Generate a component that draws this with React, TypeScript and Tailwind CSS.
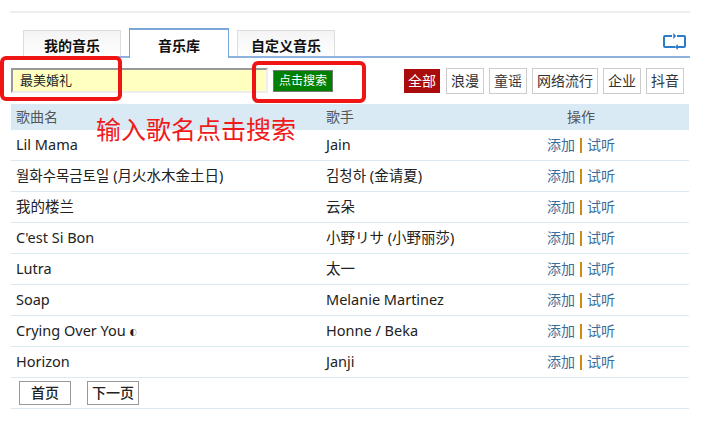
import React from "react";

const songs = [
  ["Lil Mama", "Jain"],
  ["월화수목금토일 (月火水木金土日)", "김청하 (金请夏)"],
  ["我的楼兰", "云朵"],
  ["C'est Si Bon", "小野リサ (小野丽莎)"],
  ["Lutra", "太一"],
  ["Soap", "Melanie Martinez"],
  ["Crying Over You", "Honne / Beka"],
  ["Horizon", "Janji"],
];

const tags = ["浪漫", "童谣", "网络流行", "企业", "抖音"];

const Tab = ({ label, active }: { label: string; active?: boolean }) => (
  <div
    className={
      active
        ? "w-[100px] h-[30px] -mb-[2px] bg-white border border-b-0 border-[#7ba6d9] border-t-2 text-center leading-[32px] font-bold text-[14px] text-[#111]"
        : "w-[98px] h-[26px] bg-gradient-to-b from-[#f4f4f4] to-white border border-b-0 border-[#ddd] text-center leading-[29px] font-bold text-[14px] text-[#111]"
    }
  >
    {label}
  </div>
);

export default function App() {
  return (
    <div className="relative w-[720px] h-[421px] bg-white overflow-hidden font-['Noto_Sans','Noto_Sans_CJK_SC',sans-serif] text-[14px] text-[#222]">
      <div className="pt-[11px] pl-[10px] w-[690px]">
        <div className="h-[2px] bg-[#eee]" />

        <div className="relative mt-[16px] h-[29px] flex items-end gap-[8px] pl-[13px] border-b-2 border-[#8fb1dd] box-border">
          <Tab label="我的音乐" />
          <Tab label="音乐库" active />
          <Tab label="自定义音乐" />
          <svg
            className="absolute right-[4px] top-[4px]"
            width="23"
            height="17"
            viewBox="0 0 23 17"
            fill="none"
            stroke="#2f7bcb"
            strokeWidth="2"
          >
            <path d="M9 3H2a1 1 0 0 0-1 1v9a1 1 0 0 0 1 1h10" />
            <path d="M14 3h7a1 1 0 0 1 1 1v9a1 1 0 0 1-1 1h-7" />
            <path d="M13 3l-2.5-2.5v5zM12 14l2.5-2.5v5z" fill="#2f7bcb" strokeWidth="0.5" />
          </svg>
        </div>

        <div className="flex items-center mt-[10px] h-[26px] pl-px">
          <div className="self-start w-[257px] h-[25px] bg-[#ffffbf] border-2 border-t-[#999] border-l-[#999] border-r-[#eee] border-b-[#eee] pl-[7px] text-[13px] leading-[21px] text-[#222]">
            最美婚礼
          </div>
          <div className="ml-[5px] w-[60px] h-[22px] bg-[#008000] border border-[#777] text-white text-[12px] leading-[20px] text-center">
            点击搜索
          </div>
          <div className="ml-[71px] w-[36px] h-[24px] bg-[#a80c0c] text-white text-[14px] leading-[24px] text-center">
            全部
          </div>
          <div className="flex gap-[5px] ml-[6px]">
            {tags.map((t) => (
              <div
                key={t}
                className="h-[26px] px-[4px] border border-[#ccc] text-[14px] leading-[24px] text-center text-[#333]"
              >
                {t}
              </div>
            ))}
          </div>
        </div>

        <div className="ml-px mt-[10px] w-[678px]">
          <div className="flex h-[26px] bg-[#d9eaf5] text-[14px] leading-[26px] text-[#555]">
            <div className="w-[315px] pl-[5px]">歌曲名</div>
            <div className="w-[241px]">歌手</div>
            <div>操作</div>
          </div>
          {songs.map(([name, singer]) => (
            <div
              key={name}
              className="flex h-[31px] border-b border-[#d9eaf5] leading-[29px] text-[14.5px] text-[#222]"
            >
              <div className="w-[315px] pl-[5px]">
                {name}
                {name === "Crying Over You" && <span className="ml-[4px] text-[7px] align-[1px]">◐</span>}
              </div>
              <div className="w-[221px]">{singer}</div>
              <div className="flex items-center text-[14px] leading-[30px] text-[#3a6d99]">
                添加
                <span className="inline-block w-[2px] h-[15px] mx-[5px] bg-[#d08a10]" />
                试听
              </div>
            </div>
          ))}
          <div className="flex items-center gap-[16px] h-[31px] pl-[8px] border-b border-[#d9eaf5]">
            <div className="w-[52px] h-[24px] border border-[#999] text-center text-[14px] font-medium leading-[22px]">
              首页
            </div>
            <div className="w-[52px] h-[24px] border border-[#999] text-center text-[14px] font-medium leading-[22px]">
              下一页
            </div>
          </div>
        </div>
      </div>

      {/* annotations drawn on top of the screenshot */}
      <div className="absolute left-0 top-[56px] w-[122px] h-[45px] border-4 border-[#f01515] rounded-[6px]" />
      <div className="absolute left-[252px] top-[61px] w-[114px] h-[42px] border-4 border-[#f01515] rounded-[6px]" />
      <div className="absolute left-[96px] top-[112px] text-[25px] leading-[34px] text-[#f01a1a]">
        输入歌名点击搜索
      </div>
    </div>
  );
}
